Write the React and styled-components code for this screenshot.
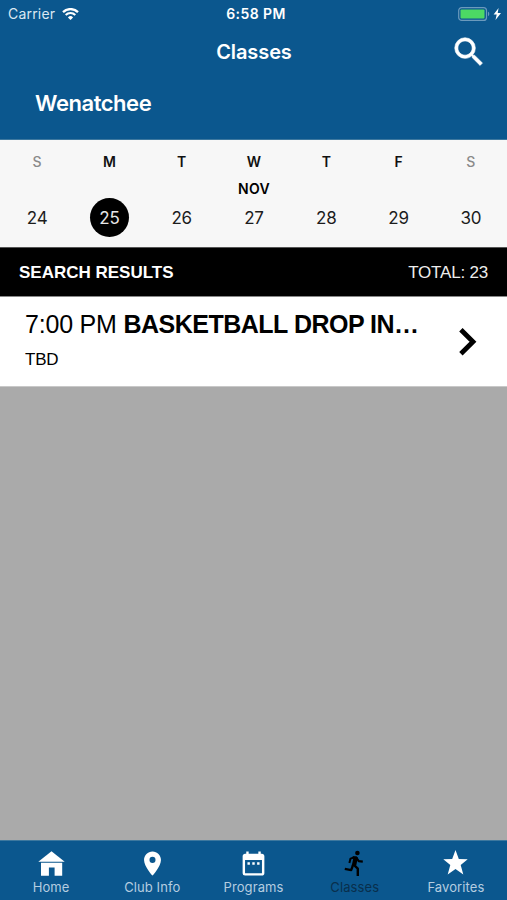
import React from 'react';
import styled, { createGlobalStyle } from 'styled-components';
import { MdSearch, MdPlace, MdDateRange } from 'react-icons/md';

const GlobalStyle = createGlobalStyle`
    * {
        box-sizing:border-box;
    }
    body {
        margin:0;
        background:#aaaaaa;
    }
    svg {
        display:block;
    }
`;

const Screen = styled.div`
    display:flex;
    flex-direction:column;
    width:507px;
    height:900px;
    overflow:hidden;
    background:#aaaaaa;
    color:#000;
    font-family:Inter, "Liberation Sans", sans-serif;
`;

const Header = styled.header`
    height:140px;
    flex:none;
    color:#fff;
    background:#0b578e;
    border-bottom:1px solid #3d789f;
`;

const StatusBar = styled.div`
    display:grid;
    grid-template-columns:1fr auto 1fr;
    align-items:center;
    height:27px;
    padding:0 5px 0 8px;
`;

const Carrier = styled.div`
    display:flex;
    align-items:center;
    gap:7px;
    font-size:14px;
    letter-spacing:0.2px;
    color:#dbe8f2;
`;

const Clock = styled.div`
    padding-left:2px;
    font-size:14px;
    font-weight:600;
    letter-spacing:0.4px;
`;

const Battery = styled.div`
    display:flex;
    justify-content:flex-end;
`;

const TitleBar = styled.div`
    display:grid;
    grid-template-columns:1fr auto 1fr;
    align-items:center;
    height:50px;
    padding:0 19px 0 20px;
`;

const Title = styled.h1`
    grid-column:2;
    margin:0;
    font-size:20px;
    line-height:24px;
    font-weight:600;
    letter-spacing:-0.1px;
`;

const SearchButton = styled.button`
    justify-self:end;
    padding:0;
    border:0;
    color:#fff;
    background:transparent;

    path:last-child {
        stroke:#fff;
        stroke-width:0.4px;
    }
    path[fill="none"] {
        stroke:none;
    }
`;

const Club = styled.h2`
    margin:14px 0 0 35px;
    font-size:22px;
    line-height:24px;
    font-weight:600;
    letter-spacing:-0.45px;
`;

const Week = styled.div`
    display:grid;
    grid-template-columns:repeat(7, 1fr);
    flex:none;
    height:107px;
    padding-left:1px;
    background:#f7f7f7;
`;

const Day = styled.div`
    display:flex;
    flex-direction:column;
    align-items:center;
`;

const Weekday = styled.div`
    margin-top:13px;
    height:18px;
    font-size:14px;
    line-height:18px;
    font-weight:${props => props.$weekend ? 500 : 600};
    color:${props => props.$weekend ? '#8a8a8a' : '#111'};
`;

const Month = styled.div`
    margin-top:9px;
    height:18px;
    font-size:14px;
    line-height:18px;
    font-weight:600;
    letter-spacing:0.3px;
`;

const DateNumber = styled.div`
    display:flex;
    align-items:center;
    justify-content:center;
    width:39px;
    height:39px;
    padding-top:1px;
    border-radius:50%;
    font-size:17px;
    letter-spacing:-0.2px;
    color:${props => props.$selected ? '#e6e6e6' : '#1c1c1c'};
    background:${props => props.$selected ? '#000' : 'transparent'};
`;

const ResultsBar = styled.div`
    display:flex;
    align-items:center;
    justify-content:space-between;
    flex:none;
    height:49px;
    padding:2px 19px 0;
    border-top:1px solid #555;
    font-family:"Liberation Sans", sans-serif;
    font-size:17px;
    color:#ededed;
    background:#000;
`;

const ResultsTitle = styled.div`
    font-weight:700;
    color:#fff;
`;

const Total = styled.div`
    letter-spacing:-0.2px;
`;

const ClassRow = styled.div`
    display:flex;
    align-items:center;
    justify-content:space-between;
    flex:none;
    height:91px;
    padding:0 28px 0 25px;
    border-top:1px solid #888;
    border-bottom:1px solid #c8c8c8;
    font-family:"Liberation Sans", sans-serif;
    background:#fff;
`;

const ClassInfo = styled.div`
    padding-bottom:5px;
`;

const ClassName = styled.div`
    font-size:25px;
    line-height:30px;
    white-space:nowrap;
    letter-spacing:-0.2px;

    b {
        letter-spacing:-0.5px;
    }
`;

const Room = styled.div`
    margin-top:11px;
    font-size:17px;
    line-height:20px;
    letter-spacing:-0.2px;
`;

const Content = styled.main`
    flex:1;
`;

const TabBar = styled.nav`
    display:grid;
    grid-template-columns:repeat(5, 1fr);
    flex:none;
    height:60px;
    padding:0 0.5px;
    background:#0b578e;
    border-top:1px solid #3d789f;
`;

const Tab = styled.div`
    display:flex;
    flex-direction:column;
    align-items:center;
    padding-top:8px;
    color:${props => props.$active ? '#000' : '#fff'};
`;

const TabLabel = styled.div`
    margin-top:1px;
    font-size:13px;
    line-height:17px;
    letter-spacing:0.1px;
    white-space:nowrap;
    color:${props => props.$active ? '#092f4c' : '#b5cde0'};
`;

function WifiIcon() {
    return (
        <svg width="17" height="12" viewBox="0 0 17 12" fill="none" stroke="#fff">
            <path d="M1 4.1a10.8 10.8 0 0 1 15 0" strokeWidth="2.3" />
            <path d="M3.7 7a6.9 6.9 0 0 1 9.6 0" strokeWidth="2.1" />
            <path d="M8.5 12 5.9 9.4a3.7 3.7 0 0 1 5.2 0z" fill="#fff" stroke="none" />
        </svg>
    );
}

function BatteryIcon() {
    return (
        <svg width="44" height="14" viewBox="0 0 44 14">
            <rect x="0.7" y="0.6" width="27.8" height="12.8" rx="3" fill="none" stroke="#6b9abd" strokeWidth="1.2" />
            <rect x="2.5" y="2.4" width="24" height="9.2" rx="1" fill="#4cd964" />
            <path d="M30 4.8c1.7.4 1.7 4 0 4.4z" fill="#6b9abd" />
            <path d="M40.6 1 35.6 7.5h3.1L37.5 13l5.5-7h-3.3z" fill="#fff" />
        </svg>
    );
}

function HomeIcon() {
    return (
        <svg width="29" height="29" viewBox="0 0 29 29" fill="#fff">
            <path d="M14.5 2.2 27.7 12.7H1.3z" />
            <path d="M4 13.8h21.2v13H17.6v-8.2h-5.7v8.2H4z" />
        </svg>
    );
}

function RunnerIcon() {
    return (
        <svg width="29" height="29" viewBox="0 0 29 29" fill="none" stroke="#000" strokeLinejoin="round">
            <circle cx="17.4" cy="4" r="2.3" fill="#000" stroke="none" />
            <path d="M12.6 7.2h4l1.2 1.5-1.5 7.6-4.6.4 1.5-7z" fill="#000" stroke="none" />
            <path d="M14.5 8.3 10.5 9.6 9.4 14" strokeWidth="2" />
            <path d="M16.4 8.5 18.7 12.1 22.8 12.6" strokeWidth="2.1" />
            <path d="M13.2 15.5 11.2 21.1 4.8 19.8" strokeWidth="2.3" />
            <path d="M13.6 15.6 17.8 19.7V27" strokeWidth="2.4" />
        </svg>
    );
}

function StarIcon() {
    return (
        <svg width="29" height="29" viewBox="0 0 29 29" fill="#fff">
            <path d="M14.5 1 17.8 10.1 26.7 10.3 19.7 16 22.3 25.5 14.5 20 6.7 25.5 9.3 16 2.3 10.3 11.2 10.1z" />
        </svg>
    );
}

function ChevronIcon() {
    return (
        <svg width="21" height="30" viewBox="0 0 21 30" fill="none" stroke="#000" strokeWidth="4.8">
            <path d="M2.9 2.7 15 14.7 2.9 26.7" />
        </svg>
    );
}

const days = [
    { name: 'S', date: 24, weekend: true },
    { name: 'M', date: 25, selected: true },
    { name: 'T', date: 26 },
    { name: 'W', date: 27, month: 'NOV' },
    { name: 'T', date: 28 },
    { name: 'F', date: 29 },
    { name: 'S', date: 30, weekend: true }
];

const tabs = [
    { label: 'Home', icon: <HomeIcon /> },
    { label: 'Club Info', icon: <MdPlace size={29} /> },
    { label: 'Programs', icon: <MdDateRange size={29} /> },
    { label: 'Classes', icon: <RunnerIcon />, active: true },
    { label: 'Favorites', icon: <StarIcon /> }
];

export default function App() {
    return (
        <Screen>
            <GlobalStyle />
            <Header>
                <StatusBar>
                    <Carrier>Carrier <WifiIcon /></Carrier>
                    <Clock>6:58 PM</Clock>
                    <Battery><BatteryIcon /></Battery>
                </StatusBar>
                <TitleBar>
                    <Title>Classes</Title>
                    <SearchButton aria-label="Search"><MdSearch size={38} /></SearchButton>
                </TitleBar>
                <Club>Wenatchee</Club>
            </Header>
            <Week>
                {days.map(day => (
                    <Day key={day.date}>
                        <Weekday $weekend={day.weekend}>{day.name}</Weekday>
                        <Month>{day.month}</Month>
                        <DateNumber $selected={day.selected}>{day.date}</DateNumber>
                    </Day>
                ))}
            </Week>
            <ResultsBar>
                <ResultsTitle>SEARCH RESULTS</ResultsTitle>
                <Total>TOTAL: 23</Total>
            </ResultsBar>
            <ClassRow>
                <ClassInfo>
                    <ClassName>7:00 PM <b>BASKETBALL DROP IN…</b></ClassName>
                    <Room>TBD</Room>
                </ClassInfo>
                <ChevronIcon />
            </ClassRow>
            <Content />
            <TabBar>
                {tabs.map(tab => (
                    <Tab key={tab.label} $active={tab.active}>
                        {tab.icon}
                        <TabLabel $active={tab.active}>{tab.label}</TabLabel>
                    </Tab>
                ))}
            </TabBar>
        </Screen>
    );
}
